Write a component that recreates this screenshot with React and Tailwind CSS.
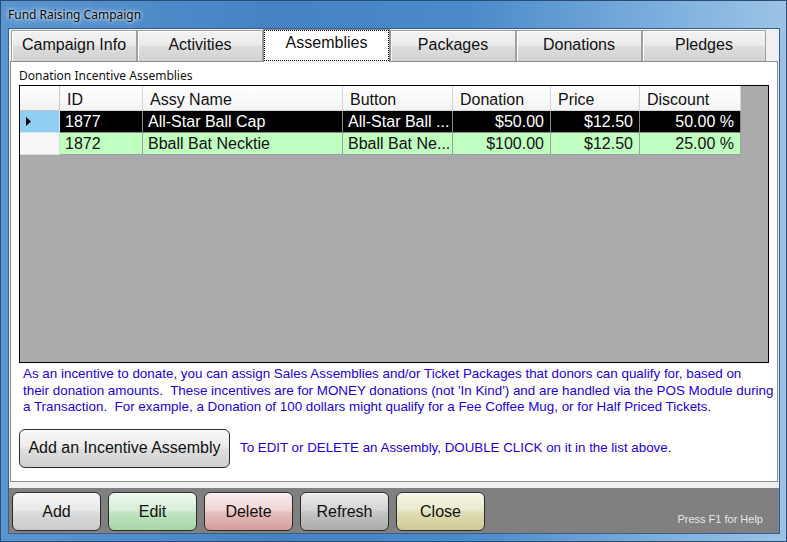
import React from "react";

const tabs = [
  { label: "Campaign Info", w: "w-[126px]" },
  { label: "Activities", w: "w-[126px]" },
  { label: "Assemblies", w: "w-[127px]", active: true },
  { label: "Packages", w: "w-[126px]" },
  { label: "Donations", w: "w-[126px]" },
  { label: "Pledges", w: "w-[124px]" },
];

const cols = [
  { key: "id", label: "ID", w: "w-[83px]", align: "left" },
  { key: "name", label: "Assy Name", w: "w-[200px]", align: "left" },
  { key: "button", label: "Button", w: "w-[110px]", align: "left" },
  { key: "donation", label: "Donation", w: "w-[98px]", align: "right" },
  { key: "price", label: "Price", w: "w-[89px]", align: "right" },
  { key: "discount", label: "Discount", w: "w-[101px]", align: "right" },
];

const rows = [
  { id: "1877", name: "All-Star Ball Cap", button: "All-Star Ball ...", donation: "$50.00", price: "$12.50", discount: "50.00 %", selected: true },
  { id: "1872", name: "Bball Bat Necktie", button: "Bball Bat Ne...", donation: "$100.00", price: "$12.50", discount: "25.00 %" },
];

function Tab({ label, w, active }) {
  if (active) {
    return (
      <div className={`${w} h-[33px] -mb-[1px] relative z-10 bg-white border border-[#898c95] border-b-0 flex items-start justify-center pt-[3px] text-[16px] text-[#111]`}>
        <div className="absolute left-[0px] right-[0px] top-[0px] bottom-[1px] border border-dotted border-black"></div>
        <span className="leading-[20px]">{label}</span>
      </div>
    );
  }
  return (
    <div className={`${w} h-[31px] border border-[#a0a0a0] border-b-0 bg-[linear-gradient(#f3f3f3,#ebebeb_45%,#dcdcdc_55%,#d2d2d2)] flex items-center justify-center text-[16px] text-[#111] shadow-[inset_1px_1px_0_#ffffff]`}>
      <span className="leading-[20px] pb-[2px]">{label}</span>
    </div>
  );
}

function Btn({ children, cls, w = "w-[89px]" }) {
  return (
    <div className={`${w} h-[39px] rounded-[6px] border border-[#2b2b2b] flex items-center justify-center text-[16px] text-[#111] shadow-[inset_0_1px_0_rgba(255,255,255,0.8)] ${cls}`}>
      {children}
    </div>
  );
}

export default function App() {
  return (
    <div className="w-[787px] h-[542px] overflow-hidden relative border border-[#2a4c75] bg-[linear-gradient(90deg,#5b95cf,#4482c3_35%,#4b8bca_60%,#7eb0de_85%,#9cc3e6)] font-['Liberation_Sans',Arial,sans-serif]">
      <div className="h-[27px] flex items-center pl-[7px] text-[12px] text-[#0a0a0a] font-['Noto_Sans','Liberation_Sans',sans-serif] [text-shadow:0_0_6px_rgba(255,255,255,0.9),0_0_3px_rgba(255,255,255,0.9)]">
        Fund Raising Campaign
      </div>
      <div className="ml-[7px] w-[772px] h-[506px] border border-[#365f8e] flex flex-col">
        <div className="h-[459px] bg-[#f0f0f0] flex flex-col">
          <div className="h-[32px] flex items-end pl-[2px]">
            {tabs.map((t) => (
              <Tab key={t.label} {...t} />
            ))}
          </div>
          <div className="ml-[1px] w-[768px] h-[421px] border border-[#898c95] bg-white flex flex-col">
            <div className="pl-[8px] mt-[6px] h-[16px] leading-[16px] text-[12px] text-[#111] font-['Noto_Sans','Liberation_Sans',sans-serif]">
              Donation Incentive Assemblies
            </div>
            <div className="ml-[8px] mt-[1px] w-[750px] h-[278px] border border-black bg-[#ababab] flex flex-col">
              <div className="flex h-[25px]">
                <div className="w-[40px] h-[25px] border-r border-b border-[#c8c8c8] bg-[linear-gradient(#ffffff,#f1f1f1)]"></div>
                {cols.map((c) => (
                  <div key={c.key} className={`${c.w} h-[25px] border-r border-b border-[#d5d5d5] bg-[linear-gradient(#ffffff,#f4f4f4)] flex items-center pl-[7px] pt-[3px] text-[16px] text-[#111]`}>
                    {c.label}
                  </div>
                ))}
              </div>
              {rows.map((r) => (
                <div key={r.id} className="flex h-[22px]">
                  <div className={`w-[40px] h-[22px] border-r border-b flex items-center pl-[6px] ${r.selected ? "bg-[#8fcdf2] border-[#cfe8f8]" : "bg-[#f7f7f7] border-[#dcdcdc]"}`}>
                    {r.selected && (
                      <svg width="5" height="9" viewBox="0 0 5 9"><path d="M0 0 L5 4.5 L0 9 Z" fill="#000" /></svg>
                    )}
                  </div>
                  {cols.map((c) => (
                    <div
                      key={c.key}
                      className={`${c.w} h-[22px] border-r border-b flex items-center pt-[1px] text-[16px] whitespace-nowrap overflow-hidden ${c.align === "right" ? "justify-end pr-[6px]" : "pl-[5px]"} ${r.selected ? "bg-black text-white border-[#8a8a8a]" : "bg-[#c0ffc0] text-[#111] border-[#a0a0a0]"}`}
                    >
                      {r[c.key]}
                    </div>
                  ))}
                </div>
              ))}
            </div>
            <div className="ml-[12px] mt-[3px] text-[13.4px] leading-[16.5px] text-[#2200dd] whitespace-pre">
              <div>As an incentive to donate, you can assign Sales Assemblies and/or Ticket Packages that donors can qualify for, based on</div>
              <div>their donation amounts.  These incentives are for MONEY donations (not 'In Kind') and are handled via the POS Module during</div>
              <div>a Transaction.  For example, a Donation of 100 dollars might qualify for a Fee Coffee Mug, or for Half Priced Tickets.</div>
            </div>
            <div className="ml-[8px] mt-[13px] flex items-center">
              <Btn w="w-[211px]" cls="bg-[linear-gradient(#f7f7f7,#ececec_45%,#dedede_55%,#cfcfcf)]">Add an Incentive Assembly</Btn>
              <div className="ml-[10px] text-[13.33px] text-[#2200dd]">To EDIT or DELETE an Assembly, DOUBLE CLICK on it in the list above.</div>
            </div>
          </div>
        </div>
        <div className="h-[45px] bg-[#808080] flex pl-[3px] pt-[4px] gap-[7px]">
          <Btn cls="bg-[linear-gradient(#f6f6f6,#e9e9e9_45%,#dadada_55%,#cacaca)]">Add</Btn>
          <Btn cls="bg-[linear-gradient(#eef8ee,#d8eed8_45%,#bfe2bf_55%,#a6d6a6)]">Edit</Btn>
          <Btn cls="bg-[linear-gradient(#fbeeee,#f0d4d4_45%,#e4bcbc_55%,#d69c9c)]">Delete</Btn>
          <Btn cls="bg-[linear-gradient(#ececec,#d4d4d4_45%,#c4c4c4_55%,#aaaaaa)]">Refresh</Btn>
          <Btn cls="bg-[linear-gradient(#f7f6e8,#ebe9cc_45%,#dfdcb4_55%,#cfca96)]">Close</Btn>
          <div className="ml-auto self-end mb-[7px] mr-[16px] text-[11px] leading-[14px] text-[#e6e6e6]">
            Press F1 for Help
          </div>
        </div>
      </div>
    </div>
  );
}
